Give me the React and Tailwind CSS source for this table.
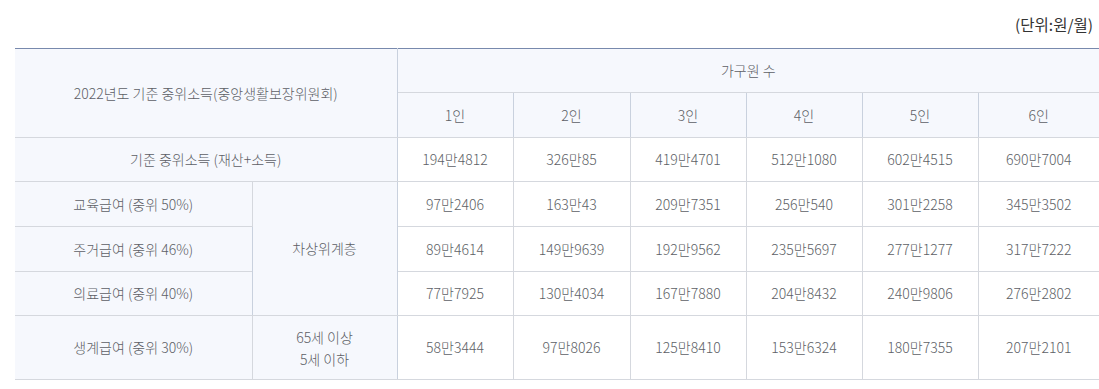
const cols = ["1인", "2인", "3인", "4인", "5인", "6인"];

const rows = [
  ["97만2406", "163만43", "209만7351", "256만540", "301만2258", "345만3502"],
  ["89만4614", "149만9639", "192만9562", "235만5697", "277만1277", "317만7222"],
  ["77만7925", "130만4034", "167만7880", "204만8432", "240만9806", "276만2802"],
];

const base = ["194만4812", "326만85", "419만4701", "512만1080", "602만4515", "690만7004"];
const last = ["58만3444", "97만8026", "125만8410", "153만6324", "180만7355", "207만2101"];

const labels = ["교육급여 (중위 50%)", "주거급여 (중위 46%)", "의료급여 (중위 40%)"];

const th = "bg-[#f6f8fd] border border-[#d5d8de] font-light text-[#5d5f66] text-center align-middle";
const td = "border border-[#d5d8de] font-light text-[#5d5f66] text-center align-middle";

export default function App() {
  return (
    <div
      className="w-[1099px] h-[389px] bg-white overflow-hidden pl-[15px]"
      style={{ fontFamily: '"Noto Sans CJK KR", "Noto Sans", sans-serif' }}
    >
      <div className="h-[48px] flex items-center justify-end pr-[6px] text-[15.5px] text-[#333] pt-[1px]">
        (단위:원/월)
      </div>
      <table className="w-[1084px] border-collapse table-fixed text-[14px] border-t border-t-[#7889ad]">
        <colgroup>
          <col className="w-[237px]" />
          <col className="w-[145px]" />
          <col className="w-[116px]" />
          <col className="w-[117px]" />
          <col className="w-[116px]" />
          <col className="w-[116px]" />
          <col className="w-[116px]" />
          <col className="w-[121px]" />
        </colgroup>
        <thead>
          <tr className="h-[44px]">
            <th colSpan={2} rowSpan={2} className={th + " border-l-0 border-t-[#7889ad] border-r-[#c9d1de]"}>
              2022년도 기준 중위소득(중앙생활보장위원회)
            </th>
            <th colSpan={6} className={th + " border-r-0 border-t-[#7889ad]"}>
              가구원 수
            </th>
          </tr>
          <tr className="h-[45px]">
            {cols.map((c, i) => (
              <th key={c} className={th + (i < 5 ? " border-r-[#c9d1de]" : " border-r-0")}>
                {c}
              </th>
            ))}
          </tr>
        </thead>
        <tbody>
          <tr className="h-[44px]">
            <th colSpan={2} className={th + " border-l-0 border-r-[#c9d1de]"}>
              기준 중위소득 (재산+소득)
            </th>
            {base.map((v, i) => (
              <td key={i} className={td + (i === 5 ? " border-r-0" : "")}>
                {v}
              </td>
            ))}
          </tr>
          {rows.map((r, ri) => (
            <tr key={ri} className={ri === 2 ? "h-[44px]" : "h-[45px]"}>
              <th className={th + " border-l-0"}>{labels[ri]}</th>
              {ri === 0 && (
                <th rowSpan={3} className={th + " border-l-[#c9d1de] border-r-[#c9d1de]"}>
                  차상위계층
                </th>
              )}
              {r.map((v, i) => (
                <td key={i} className={td + (i === 5 ? " border-r-0" : "")}>
                  {v}
                </td>
              ))}
            </tr>
          ))}
          <tr className="h-[64px]">
            <th className={th + " border-l-0"}>생계급여 (중위 30%)</th>
            <th className={th + " border-l-[#c9d1de] border-r-[#c9d1de] leading-[22px]"}>
              65세 이상
              <br />
              5세 이하
            </th>
            {last.map((v, i) => (
              <td key={i} className={td + (i === 5 ? " border-r-0" : "")}>
                {v}
              </td>
            ))}
          </tr>
        </tbody>
      </table>
    </div>
  );
}
